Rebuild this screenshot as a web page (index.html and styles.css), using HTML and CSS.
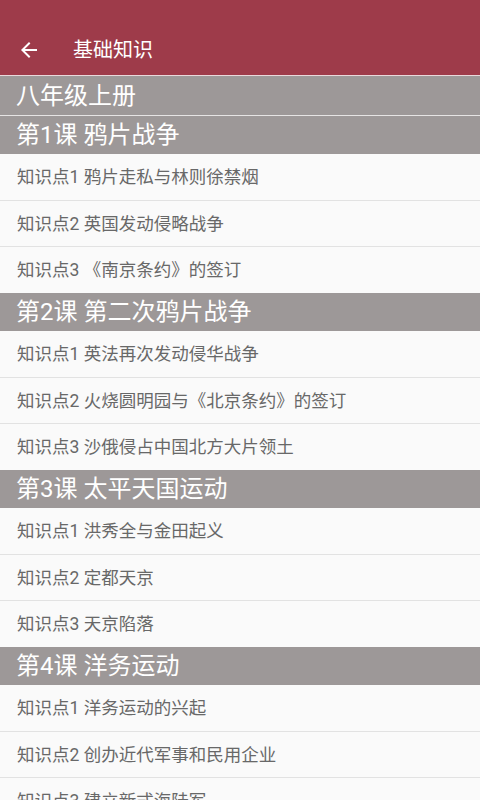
FILE: index.html
```html
<!DOCTYPE html>
<html lang="zh-CN">
<head>
<meta charset="utf-8">
<title>基础知识</title>
<link rel="stylesheet" href="styles.css">
</head>
<body>
<header class="appbar">
  <svg class="back" viewBox="0 0 24 24" width="24" height="24"><path d="M20 11H7.83l5.59-5.59L12 4l-8 8 8 8 1.41-1.41L7.83 13H20v-2z" fill="#fff"/></svg>
  <span class="title">基础知识</span>
</header>
<main class="list">
  <div class="grade">八年级上册</div>
  <section class="lesson">
    <div class="lesson-title">第1课 鸦片战争</div>
    <div class="item">知识点1 鸦片走私与林则徐禁烟</div>
    <div class="item">知识点2 英国发动侵略战争</div>
    <div class="item">知识点3 《南京条约》的签订</div>
  </section>
  <section class="lesson">
    <div class="lesson-title">第2课 第二次鸦片战争</div>
    <div class="item">知识点1 英法再次发动侵华战争</div>
    <div class="item">知识点2 火烧圆明园与《北京条约》的签订</div>
    <div class="item">知识点3 沙俄侵占中国北方大片领土</div>
  </section>
  <section class="lesson">
    <div class="lesson-title">第3课 太平天国运动</div>
    <div class="item">知识点1 洪秀全与金田起义</div>
    <div class="item">知识点2 定都天京</div>
    <div class="item">知识点3 天京陷落</div>
  </section>
  <section class="lesson">
    <div class="lesson-title">第4课 洋务运动</div>
    <div class="item">知识点1 洋务运动的兴起</div>
    <div class="item">知识点2 创办近代军事和民用企业</div>
    <div class="item">知识点3 建立新式海陆军</div>
  </section>
</main>
</body>
</html>
```
FILE: styles.css
```css
html, body {
  margin: 0;
  padding: 0;
}
body {
  width: 480px;
  height: 800px;
  overflow: hidden;
  background: #fafafa;
  font-family: Roboto, "Noto Sans CJK SC", sans-serif;
}
.appbar {
  height: 75px;
  background: #9e3b4a;
  border-bottom: 1px solid #e9d9dc;
  display: flex;
  align-items: flex-end;
}
.appbar .back {
  margin: 0 0 13px 17px;
  flex: none;
}
.appbar .title {
  color: #fff;
  font-size: 20px;
  line-height: 26px;
  margin: 0 0 12px 32px;
}
.grade {
  height: 40px;
  line-height: 40px;
  background: #9d9898;
  color: #fff;
  font-size: 24px;
  padding-left: 16px;
  border-bottom: 1px solid #e6e4e4;
  box-sizing: border-box;
}
.lesson-title {
  height: 38px;
  line-height: 39px;
  background: #9d9898;
  color: #fff;
  font-size: 24px;
  padding-left: 16px;
}
.item {
  height: 45.67px;
  line-height: 47px;
  color: #686868;
  font-size: 17.5px;
  padding-left: 17px;
  background: #fafafa;
  overflow: hidden;
}
.item + .item {
  border-top: 1px solid #e2e2e2;
}
```
